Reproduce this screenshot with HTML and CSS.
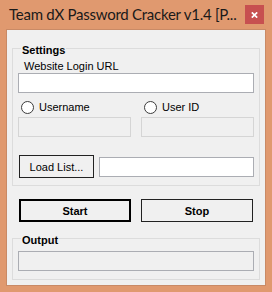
FILE: index.html
```html
<!DOCTYPE html>
<html>
<head>
    <title>Team dX Password Cracker</title>
    <link rel="stylesheet" href="styles.css">
</head>
<body>
    <div class="window">
        <div class="titlebar">
            <span class="title">Team dX Password Cracker v1.4 [P...</span>
            <span class="close">
                <svg width="7" height="6" viewBox="0 0 7 6">
                    <path d="M0.8 0.4 L6.2 5.6 M6.2 0.4 L0.8 5.6" stroke="#fff" stroke-width="1.7" fill="none"/>
                </svg>
            </span>
        </div>

        <div class="client">
            <div class="group settings">
                <div class="group-title">Settings</div>
                <div class="label">Website Login URL</div>
                <div class="textbox"></div>

                <div class="pair radios">
                    <label class="radio"><span class="radio-dot"></span>Username</label>
                    <label class="radio"><span class="radio-dot"></span>User ID</label>
                </div>
                <div class="pair fields">
                    <div class="textbox disabled"></div>
                    <div class="textbox disabled"></div>
                </div>

                <div class="load-row">
                    <div class="button load">Load List...</div>
                    <div class="textbox list-path"></div>
                </div>
            </div>

            <div class="actions">
                <div class="button default">Start</div>
                <div class="button">Stop</div>
            </div>

            <div class="group output">
                <div class="group-title">Output</div>
                <div class="textbox readonly"></div>
            </div>
        </div>
    </div>
</body>
</html>
```

FILE: styles.css
```css
* {
    box-sizing: border-box;
}
body {
    margin: 0;
    font-family: "Liberation Sans", Arial, sans-serif;
    font-size: 11px;
    line-height: 13px;
    color: #000;
}
.window {
    width: 272px;
    height: 292px;
    background-color: #E0996F;
}
.titlebar {
    height: 29px;
    display: flex;
    padding-left: 9px;
}
.title {
    flex: 1;
    min-width: 0;
    font-family: Lato, "Noto Sans", sans-serif;
    font-size: 15px;
    letter-spacing: -0.25px;
    line-height: 20px;
    padding-top: 4px;
    white-space: nowrap;
    color: #1a1a1a;
}
.close {
    margin: 5px 8px 0 4px;
    width: 19px;
    height: 19px;
    flex-shrink: 0;
    background-color: #C75050;
    display: flex;
    align-items: center;
    justify-content: center;
}
.close svg {
    display: block;
}
.client {
    margin-left: 6px;
    width: 260px;
    height: 257px;
    border: 1px solid #C98A66;
    background-color: #F0F0F0;
    padding: 18px 5px 0;
}
.group {
    border: 1px solid #DCDCDC;
    padding: 0 5px 7px;
}
.group-title {
    font-weight: bold;
    width: max-content;
    margin: -5px 0 0 3px;
    padding: 0 1px;
    background-color: #F0F0F0;
}
.label {
    margin: 3px 0 0 6px;
}
.textbox {
    height: 20px;
    border: 1px solid #ABADB3;
    background-color: #fff;
}
.textbox.disabled {
    background-color: #F0F0F0;
    border-color: #D5D5D5;
}
.textbox.readonly {
    background-color: #F0F0F0;
}
.pair {
    display: grid;
    grid-template-columns: 1fr 1fr;
    column-gap: 10px;
}
.radios {
    margin-top: 8px;
}
.fields {
    margin-top: 3px;
}
.radio {
    display: flex;
    align-items: center;
    gap: 5px;
    height: 13px;
    padding-left: 3px;
}
.radio-dot {
    width: 13px;
    height: 13px;
    border-radius: 50%;
    border: 1px solid #3c3c3c;
    background-color: #fff;
}
.load-row {
    display: flex;
    align-items: center;
    gap: 5px;
    margin-top: 18px;
    padding-left: 1px;
}
.list-path {
    flex: 1;
}
.button {
    height: 23px;
    border: 1px solid #222;
    background-color: #F0F0F0;
    text-align: center;
    padding-top: 5px;
}
.button.load {
    width: 75px;
}
.actions {
    display: flex;
    gap: 10px;
    margin: 13px 0 0 7px;
}
.actions .button {
    width: 112px;
    font-weight: bold;
}
.button.default {
    border: 2px solid #000;
    padding-top: 4px;
}
.output {
    margin-top: 16px;
    padding-bottom: 8px;
}
.output .textbox {
    margin-top: 4px;
}
```
